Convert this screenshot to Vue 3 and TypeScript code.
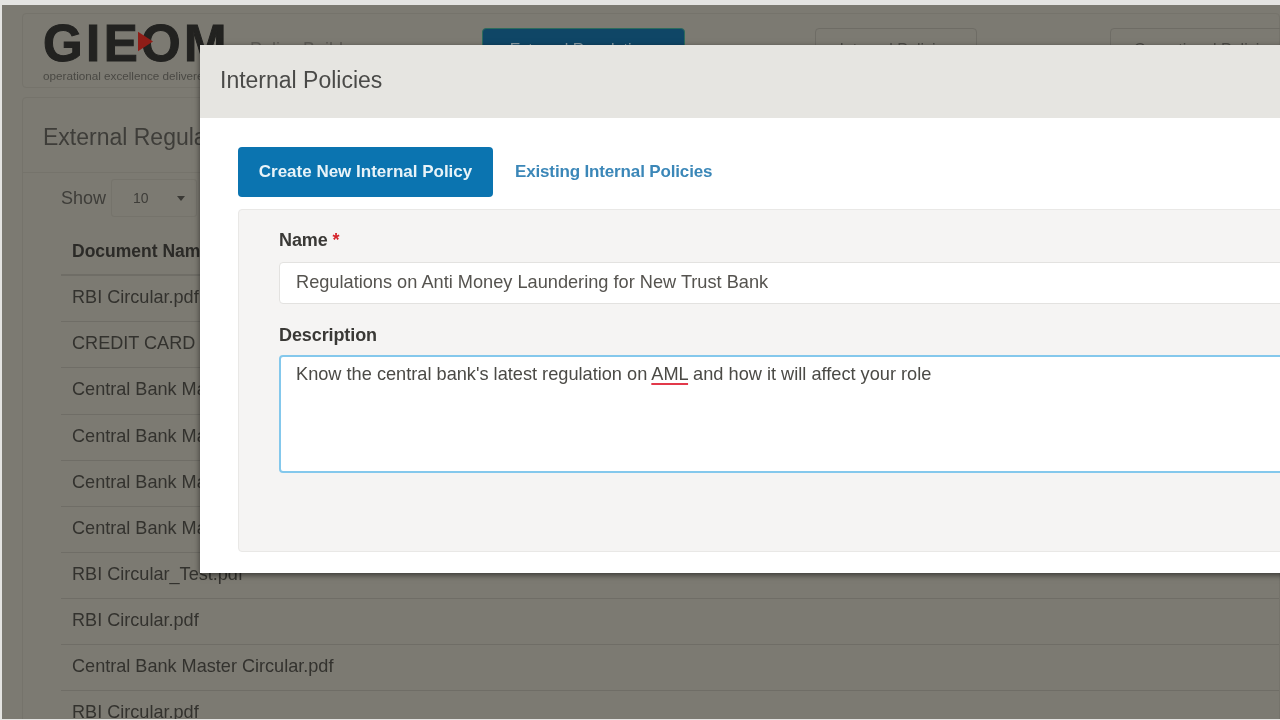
<script setup lang="ts">
const rows: string[] = [
  'RBI Circular.pdf',
  'CREDIT CARD Policy.pdf',
  'Central Bank Master Circular.pdf',
  'Central Bank Master Circular.pdf',
  'Central Bank Master Circular.pdf',
  'Central Bank Master Circular.pdf',
  'RBI Circular_Test.pdf',
  'RBI Circular.pdf',
  'Central Bank Master Circular.pdf',
  'RBI Circular.pdf',
]
</script>

<template>
  <div class="frame">
    <div class="page">
      <header class="topbar">
        <div class="brand">
          <div class="logo">
            <span class="logo-word">GIEOM</span>
            <svg class="logo-arrow" viewBox="0 0 14 18" aria-hidden="true"><polygon points="0,0 14,9 0,18" fill="#8f1d17" /></svg>
          </div>
          <div class="tagline">operational excellence delivered</div>
        </div>
        <div class="product">Policy Builder</div>
        <button class="nav nav-active">External Regulations</button>
        <button class="nav nav-one">Internal Policies</button>
        <button class="nav nav-two">Operational Policies</button>
      </header>

      <section class="panel">
        <h2 class="panel-title">External Regulations</h2>
        <div class="table-box">
          <div class="length">
            <span>Show</span>
            <span class="select"><span>10</span><span class="caret"></span></span>
          </div>
          <div class="row row-head">Document Name</div>
          <div v-for="(row, i) in rows" :key="i" class="row">{{ row }}</div>
        </div>
      </section>
    </div>

    <div class="modal">
      <div class="modal-head">Internal Policies</div>
      <div class="modal-body">
        <div class="tabs">
          <a class="tab tab-active">Create New Internal Policy</a>
          <a class="tab">Existing Internal Policies</a>
        </div>
        <div class="form-panel">
          <label class="label">Name <span class="req">*</span></label>
          <div class="field">Regulations on Anti Money Laundering for New Trust Bank</div>
          <label class="label label-desc">Description</label>
          <div class="field field-area">Know the central bank's latest regulation on <span class="spell">AML</span> and how it will affect your role</div>
        </div>
      </div>
    </div>
  </div>
</template>

<style scoped>
.frame {
  position: relative;
  width: 1280px;
  height: 720px;
  overflow: hidden;
  background: #e4e4e2;
  padding: 5px 0 1px 2px;
  box-sizing: border-box;
  font-family: "Liberation Sans", Arial, sans-serif;
  filter: blur(0.7px);
}
.page {
  height: 100%;
  background: #7c7a72;
  overflow: hidden;
  color: #34332f;
}
.topbar {
  display: flex;
  align-items: flex-start;
  height: 75px;
  margin: 8px 0 0 20px;
  border: 1px solid #75736b;
  border-radius: 4px;
  box-sizing: border-box;
  position: relative;
}
.brand {
  width: 205px;
  box-sizing: border-box;
  padding: 8px 0 0 20px;
  flex: none;
}
.logo {
  position: relative;
  width: 190px;
  height: 44px;
}
.logo-word {
  font-size: 51px;
  line-height: 44px;
  font-weight: 700;
  color: #222220;
  letter-spacing: 3.4px;
  -webkit-text-stroke: 1px #222220;
  display: block;
  white-space: nowrap;
}
.logo-arrow {
  position: absolute;
  left: 95px;
  top: 8px;
  width: 15px;
  height: 23px;
}
.tagline {
  font-size: 11.7px;
  line-height: 14px;
  color: #4a4944;
  margin-top: 3px;
  white-space: nowrap;
}
.product {
  font-size: 18px;
  color: #5d5b55;
  margin: 25px 0 0 22px;
  width: 232px;
  flex: none;
}
.nav {
  font: inherit;
  font-size: 16px;
  height: 44px;
  margin-top: 14px;
  padding: 0;
  border-radius: 4px;
  border: 1px solid #6e6c65;
  background: transparent;
  color: #4c4b46;
  flex: none;
  text-align: center;
}
.nav-active {
  width: 203px;
  background: #0f4666;
  border-color: #2c6b5d;
  color: #8b9ea6;
}
.nav-one {
  width: 162px;
  margin-left: 130px;
}
.nav-two {
  width: 190px;
  margin-left: 133px;
}
.panel {
  margin: 9px 0 0 20px;
  border: 1px solid #75736b;
  border-radius: 4px;
  padding: 0;
}
.panel-title {
  font-size: 23px;
  font-weight: 400;
  line-height: 28px;
  margin: 0;
  padding: 25px 0 21px 20px;
  color: #3e3d39;
  white-space: nowrap;
  border-bottom: 1px solid #75736b;
}
.table-box {
  padding: 5px 0 0 38px;
}
.length {
  display: flex;
  align-items: center;
  gap: 5px;
  font-size: 18px;
  color: #3e3d39;
  height: 40px;
}
.select {
  display: flex;
  align-items: center;
  justify-content: space-between;
  width: 86px;
  height: 38px;
  padding: 0 11px 0 21px;
  box-sizing: border-box;
  border: 1px solid #75736b;
  border-radius: 3px;
  font-size: 14px;
}
.caret {
  width: 0;
  height: 0;
  border-left: 4px solid transparent;
  border-right: 4px solid transparent;
  border-top: 5px solid #3a3935;
}
.row {
  height: 46.15px;
  line-height: 43px;
  border-bottom: 1px solid #6f6d66;
  box-sizing: border-box;
  padding-left: 11px;
  font-size: 18.1px;
  white-space: nowrap;
  color: #33322e;
}
.row-head {
  font-weight: 700;
  font-size: 17.5px;
  margin-top: 12px;
  color: #2b2a27;
  border-bottom-width: 2px;
}
.modal {
  position: absolute;
  left: 200px;
  top: 45px;
  width: 1200px;
  height: 528px;
  background: #fff;
  box-shadow: 0 2px 6px rgba(0, 0, 0, 0.55);
}
.modal-head {
  height: 73px;
  line-height: 71px;
  padding-left: 20px;
  background: #e6e5e1;
  font-size: 23px;
  color: #4a4a48;
}
.modal-body {
  padding: 29px 0 0 38px;
}
.tabs {
  display: flex;
  align-items: center;
  height: 50px;
}
.tab {
  font-size: 17px;
  font-weight: 700;
  letter-spacing: -0.15px;
  color: #3b87b8;
  padding: 0 22px;
  line-height: 50px;
}
.tab-active {
  width: 255px;
  box-sizing: border-box;
  background: #0b74b0;
  color: #e8f3f8;
  border-radius: 4px;
  text-align: center;
  padding: 0;
  letter-spacing: 0;
}
.form-panel {
  margin-top: 12px;
  height: 343px;
  box-sizing: border-box;
  background: #f5f4f3;
  border: 1px solid #e9e8e6;
  border-radius: 4px;
  padding: 18px 0 0 40px;
}
.label {
  display: block;
  font-size: 18px;
  font-weight: 700;
  letter-spacing: -0.1px;
  line-height: 24px;
  color: #3a3936;
}
.label-desc {
  margin-top: 19px;
}
.req {
  color: #d5232a;
}
.field {
  margin-top: 10px;
  height: 42px;
  line-height: 38px;
  box-sizing: border-box;
  background: #fff;
  border: 1px solid #e3e2e0;
  border-radius: 4px;
  padding-left: 16px;
  font-size: 18.2px;
  color: #55534f;
  white-space: nowrap;
}
.field-area {
  margin-top: 8px;
  height: 118px;
  line-height: 34px;
  padding-left: 15px;
  border: 2px solid #84c8ec;
  color: #4b4a46;
}
.spell {
  text-decoration-line: underline;
  text-decoration-color: #e2394a;
  text-decoration-thickness: 2px;
  text-underline-offset: 3px;
}
</style>
